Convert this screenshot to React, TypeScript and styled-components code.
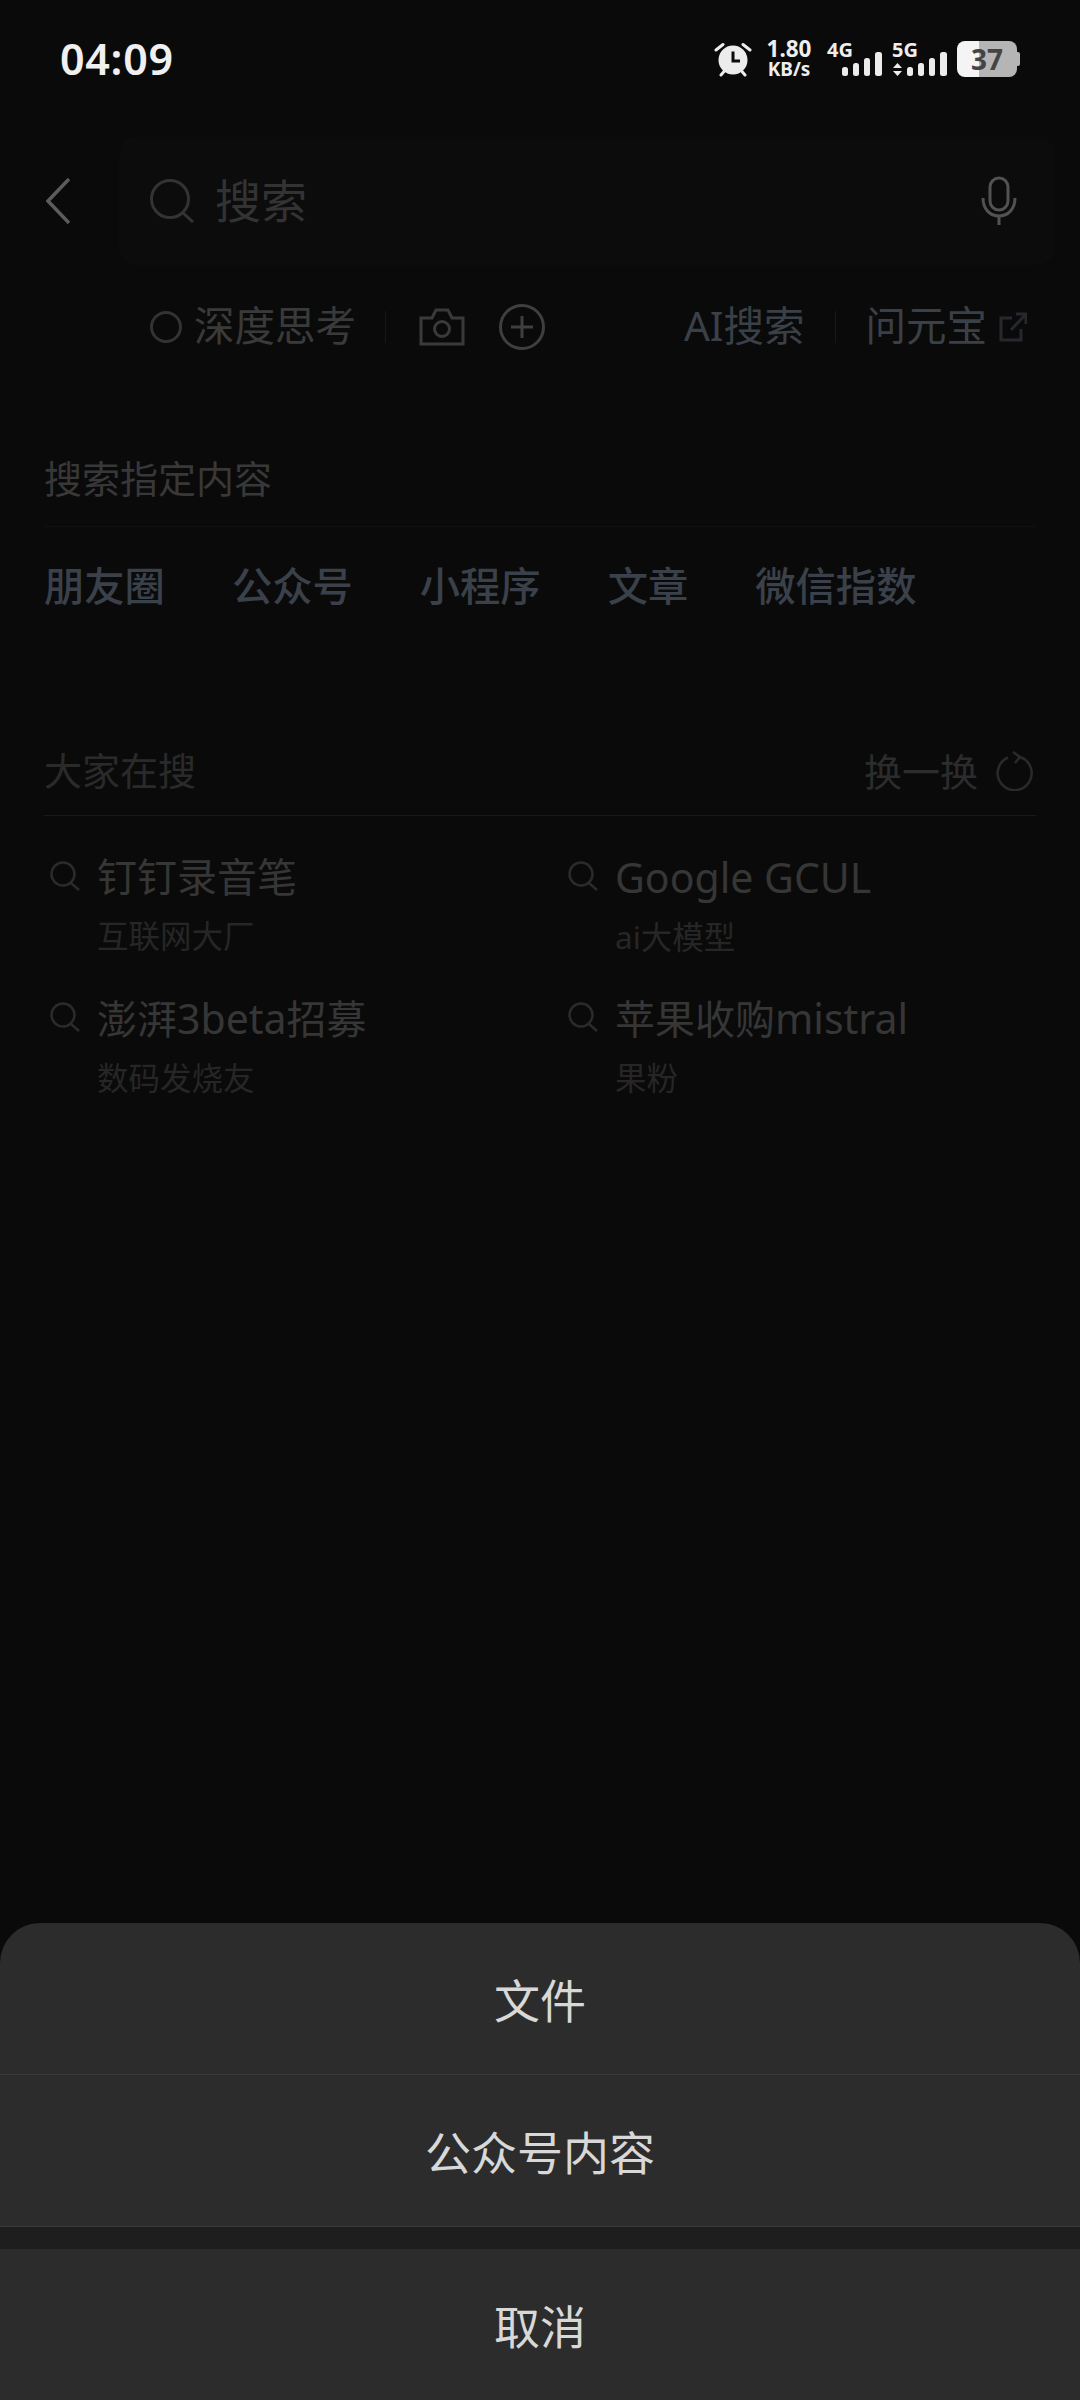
import styled, { createGlobalStyle } from 'styled-components';

const GlobalStyle = createGlobalStyle`
  html, body {
    margin: 0;
    padding: 0;
    background: #0a0a0a;
  }
  * {
    box-sizing: border-box;
  }
  body {
    font-family: 'Noto Sans', 'Noto Sans CJK SC', sans-serif;
  }
`;

const Page = styled.div`
  width: 1080px;
  height: 2400px;
  display: flex;
  flex-direction: column;
  background: #0a0a0a;
  overflow: hidden;
`;

const StatusBar = styled.div`
  height: 118px;
  padding: 0 60px 0 60px;
  display: flex;
  align-items: center;
  justify-content: space-between;
`;

const Clock = styled.div`
  font-size: 43px;
  font-weight: 600;
  color: #f0f0f0;
  letter-spacing: 0.7px;
  line-height: 50px;
`;

const StatusIcons = styled.div`
  display: flex;
  align-items: center;
  height: 40px;
`;

const Speed = styled.div`
  margin-left: 13px;
  width: 48px;
  display: flex;
  flex-direction: column;
  align-items: center;
  color: #eeeeee;
  font-weight: 700;
`;

const SpeedValue = styled.span`
  font-size: 22.5px;
  line-height: 20px;
`;

const SpeedUnit = styled.span`
  font-size: 19px;
  line-height: 20px;
`;

const SignalBlock = styled.div<{ $gap: number }>`
  margin-left: ${(props) => props.$gap}px;
  display: flex;
  flex-direction: column;
  align-items: flex-end;
  width: 55px;
`;

const SignalLabel = styled.span`
  align-self: flex-start;
  font-size: 20px;
  line-height: 14px;
  font-weight: 700;
  color: #eeeeee;
  margin-bottom: -5px;
`;

const SignalRow = styled.div`
  display: flex;
  align-items: flex-end;
  gap: 5px;
`;

const Battery = styled.div`
  margin-left: 10px;
  width: 60px;
  height: 36px;
  border-radius: 8px;
  background: linear-gradient(to right, #f4f4f4 0 22px, #b5b5b5 22px);
  display: flex;
  align-items: center;
  justify-content: center;
  color: #444444;
  font-size: 28px;
  font-weight: 700;
  line-height: 36px;
`;

const BatteryCap = styled.div`
  width: 3px;
  height: 14px;
  background: #b5b5b5;
  border-radius: 0 2px 2px 0;
`;

const SearchRow = styled.div`
  margin-top: 19px;
  height: 128px;
  padding: 0 25px 0 46px;
  display: flex;
  align-items: center;
`;

const SearchBox = styled.div`
  margin-left: 49px;
  flex: 1;
  height: 128px;
  border-radius: 18px;
  background: #0c0c0c;
  padding: 0 38px 0 31px;
  display: flex;
  align-items: center;
`;

const Placeholder = styled.span`
  flex: 1;
  margin: -2px 0 0 20px;
  font-size: 46px;
  line-height: 60px;
  color: #333333;
`;

const Toolbar = styled.div`
  margin-top: 39px;
  height: 46px;
  padding: 0 53px 0 150px;
  display: flex;
  align-items: center;
`;

const Radio = styled.span`
  width: 32px;
  height: 32px;
  border: 3px solid #333333;
  border-radius: 50%;
`;

const ToolLabel = styled.span`
  margin: -2px 0 0 12px;
  font-size: 40.5px;
  line-height: 46px;
  color: #3a3a3a;
`;

const VRule = styled.span<{ $before: number; $after: number }>`
  width: 1px;
  height: 32px;
  margin: 0 ${(props) => props.$after}px 0 ${(props) => props.$before}px;
  background: #181818;
`;

const ToolLink = styled.span`
  margin-top: -2px;
  font-size: 40.5px;
  line-height: 46px;
  color: #3a4048;
`;

const PlusWrap = styled.span`
  display: flex;
  margin-left: 34px;
`;

const ExternalWrap = styled.span`
  display: flex;
  margin-left: 12px;
`;

const Spacer = styled.span`
  flex: 1;
`;

const SectionTitle = styled.div`
  margin-top: 105px;
  padding: 0 44px;
  font-size: 38px;
  line-height: 46px;
  color: #383838;
`;

const FaintRule = styled.div`
  margin: 25px 44px 0;
  height: 1px;
  background: #101010;
`;

const Shortcuts = styled.div`
  margin-top: 34px;
  padding: 0 44px;
  display: flex;
  gap: 67px;
`;

const Shortcut = styled.span`
  font-size: 40.3px;
  line-height: 50px;
  font-weight: 500;
  color: #3a414a;
`;

const TrendHeader = styled.div`
  margin: 138px 44px 0;
  height: 67px;
  padding-bottom: 23px;
  border-bottom: 1px solid #1a1a1a;
  display: flex;
  align-items: center;
  justify-content: space-between;
`;

const TrendTitle = styled.span`
  margin-top: -2px;
  font-size: 38px;
  line-height: 44px;
  color: #2a2a2a;
`;

const Refresh = styled.span`
  display: flex;
  align-items: center;
  gap: 18px;
  margin-right: 3px;
  font-size: 38px;
  line-height: 44px;
  color: #2c2c2c;
`;

const TrendGrid = styled.div`
  padding: 35px 0 0 50px;
  display: grid;
  grid-template-columns: 518px 1fr;
  grid-auto-rows: 141px;
`;

const TrendItem = styled.div`
  display: flex;
  align-items: flex-start;
  gap: 17px;
`;

const TrendIcon = styled.svg`
  margin-top: 10px;
  flex: none;
`;

const TrendText = styled.div`
  display: flex;
  flex-direction: column;
`;

const TrendName = styled.span`
  font-size: 40px;
  line-height: 52px;
  color: #363636;
`;

const Latin = styled.span`
  font-size: 41px;
`;

const TrendSource = styled.span`
  margin-top: 15px;
  font-size: 31.5px;
  line-height: 36px;
  color: #262626;
`;

const Sheet = styled.div`
  margin-top: auto;
  border-radius: 40px 40px 0 0;
  overflow: hidden;
  background: #2c2c2c;
`;

const SheetItem = styled.div`
  height: 151px;
  padding-bottom: 2px;
  display: flex;
  align-items: center;
  justify-content: center;
  font-size: 46px;
  color: #d8d8d8;
`;

const SheetRule = styled.div`
  height: 1px;
  background: #3a3a3a;
`;

const SheetGap = styled.div`
  height: 22px;
  background: #1e1e1e;
`;

const AlarmIcon = () => (
  <svg width="38" height="38" viewBox="0 0 38 38" fill="none">
    <circle cx="19" cy="20" r="14.5" fill="#ececec" />
    <path d="M19 11.5V21H26" stroke="#0a0a0a" strokeWidth="3" />
    <path d="M2 10L9 4.5M36 10L29 4.5M7 35L10 31.5M31 35L28 31.5" stroke="#ececec" strokeWidth="3" strokeLinecap="round" />
  </svg>
);

const Bars = () => (
  <svg width="40" height="24" viewBox="0 0 40 24" fill="#ececec">
    <rect x="0" y="15" width="6" height="9" rx="2.5" />
    <rect x="11" y="11" width="6" height="13" rx="2.5" />
    <rect x="22" y="6" width="6" height="18" rx="2.5" />
    <rect x="33" y="0" width="7" height="24" rx="2.5" />
  </svg>
);

const UpDown = () => (
  <svg width="9" height="13" viewBox="0 0 9 13" fill="#ececec">
    <path d="M4.5 0L9 5H0ZM0 8H9L4.5 13Z" />
  </svg>
);

const BackIcon = () => (
  <svg width="24" height="46" viewBox="0 0 24 46" fill="none">
    <path d="M23 1L2 23L23 45" stroke="#5c5c5c" strokeWidth="3.5" />
  </svg>
);

const SearchIcon = () => (
  <svg width="45" height="44" viewBox="0 0 45 44" fill="none">
    <circle cx="20" cy="20" r="18.5" stroke="#333333" strokeWidth="3" />
    <path d="M32 33L43 43" stroke="#333333" strokeWidth="3" />
  </svg>
);

const MicIcon = () => (
  <svg width="36" height="50" viewBox="0 0 36 50" fill="none" stroke="#525252" strokeWidth="3">
    <rect x="9" y="2" width="18" height="32" rx="9" />
    <path d="M2 22C2 33 9 40 18 40C27 40 34 33 34 22M18 40V49" />
  </svg>
);

const CameraIcon = () => (
  <svg width="46" height="38" viewBox="0 0 46 38" fill="none" stroke="#3a3a3a" strokeWidth="3">
    <path d="M2 10H13L17 2H29L33 10H44V36H2Z" />
    <circle cx="23" cy="21" r="7.5" />
  </svg>
);

const PlusIcon = () => (
  <svg width="46" height="46" viewBox="0 0 46 46" fill="none" stroke="#3f3f3f" strokeWidth="3">
    <circle cx="23" cy="23" r="21.5" />
    <path d="M23 12V34M12 23H34" />
  </svg>
);

const ExternalIcon = () => (
  <svg width="28" height="30" viewBox="0 0 28 30" fill="none" stroke="#25282c" strokeWidth="3">
    <path d="M13 6H2V28H22V17M12 18L27 2M17 2H27V12" />
  </svg>
);

const RefreshIcon = () => (
  <svg width="37" height="40" viewBox="0 0 37 40" fill="none" stroke="#2a2a2a" strokeWidth="2.5">
    <path d="M12 6.5A17 17 0 1 0 24 6M17 1L24 6L19 12" />
  </svg>
);

const SmallSearch = () => (
  <TrendIcon width="30" height="30" viewBox="0 0 30 30" fill="none" stroke="#2b2b2b" strokeWidth="2.5">
    <circle cx="13" cy="13" r="11.5" />
    <path d="M21 22L29 29" />
  </TrendIcon>
);

const trends = [
  { id: 'dingding', name: <>钉钉录音笔</>, source: '互联网大厂' },
  { id: 'google', name: <Latin>Google GCUL</Latin>, source: 'ai大模型' },
  { id: 'pengpai', name: <>澎湃<Latin>3beta</Latin>招募</>, source: '数码发烧友' },
  { id: 'apple', name: <>苹果收购<Latin>mistral</Latin></>, source: '果粉' },
];

const shortcuts = ['朋友圈', '公众号', '小程序', '文章', '微信指数'];

const App = () => {
  return (
    <Page>
      <GlobalStyle />
      <StatusBar>
        <Clock>04:09</Clock>
        <StatusIcons>
          <AlarmIcon />
          <Speed>
            <SpeedValue>1.80</SpeedValue>
            <SpeedUnit>KB/s</SpeedUnit>
          </Speed>
          <SignalBlock $gap={14}>
            <SignalLabel>4G</SignalLabel>
            <Bars />
          </SignalBlock>
          <SignalBlock $gap={10}>
            <SignalLabel>5G</SignalLabel>
            <SignalRow>
              <UpDown />
              <Bars />
            </SignalRow>
          </SignalBlock>
          <Battery>37</Battery>
          <BatteryCap />
        </StatusIcons>
      </StatusBar>

      <SearchRow>
        <BackIcon />
        <SearchBox>
          <SearchIcon />
          <Placeholder>搜索</Placeholder>
          <MicIcon />
        </SearchBox>
      </SearchRow>

      <Toolbar>
        <Radio />
        <ToolLabel>深度思考</ToolLabel>
        <VRule $before={29} $after={33} />
        <CameraIcon />
        <PlusWrap>
          <PlusIcon />
        </PlusWrap>
        <Spacer />
        <ToolLink>AI搜索</ToolLink>
        <VRule $before={30} $after={30} />
        <ToolLink>问元宝</ToolLink>
        <ExternalWrap>
          <ExternalIcon />
        </ExternalWrap>
      </Toolbar>

      <SectionTitle>搜索指定内容</SectionTitle>
      <FaintRule />
      <Shortcuts>
        {shortcuts.map((el) => (
          <Shortcut key={el}>{el}</Shortcut>
        ))}
      </Shortcuts>

      <TrendHeader>
        <TrendTitle>大家在搜</TrendTitle>
        <Refresh>
          换一换
          <RefreshIcon />
        </Refresh>
      </TrendHeader>
      <TrendGrid>
        {trends.map((el) => (
          <TrendItem key={el.id}>
            <SmallSearch />
            <TrendText>
              <TrendName>{el.name}</TrendName>
              <TrendSource>{el.source}</TrendSource>
            </TrendText>
          </TrendItem>
        ))}
      </TrendGrid>

      <Sheet>
        <SheetItem>文件</SheetItem>
        <SheetRule />
        <SheetItem>公众号内容</SheetItem>
        <SheetRule />
        <SheetGap />
        <SheetItem>取消</SheetItem>
      </Sheet>
    </Page>
  );
};

export default App;
